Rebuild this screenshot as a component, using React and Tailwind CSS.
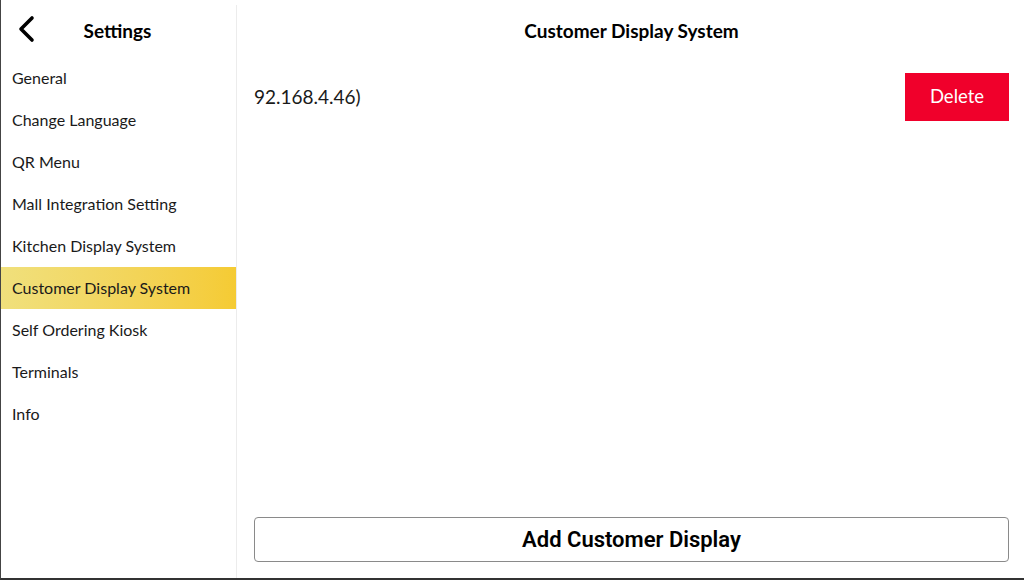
import React from 'react';

const menu = [
  'General',
  'Change Language',
  'QR Menu',
  'Mall Integration Setting',
  'Kitchen Display System',
  'Customer Display System',
  'Self Ordering Kiosk',
  'Terminals',
  'Info',
];

export default function App() {
  const active = 'Customer Display System';

  return (
    <div className="w-[1024px] h-[580px] flex bg-white border-l border-l-[#444] border-b-2 border-b-[#333] font-['Lato','Open_Sans',sans-serif] text-[#1a1a1a] overflow-hidden">
      <aside className="w-[236px] shrink-0 flex flex-col border-r border-r-[#ececec] mt-[5px]">
        <div className="h-[52px] flex items-center relative">
          <button className="absolute left-[14px] top-[10px] p-0">
            <svg width="22" height="28" viewBox="0 0 22 28" fill="none">
              <path d="M17 3 L6 14 L17 25" stroke="#000" strokeWidth="3.6" strokeLinecap="round" strokeLinejoin="round" />
            </svg>
          </button>
          <div className="w-full text-center pr-[2px] text-[19px] font-bold text-black">Settings</div>
        </div>
        <nav className="flex flex-col">
          {menu.map((item) => (
            <div
              key={item}
              className={`h-[42px] flex items-center pl-[11px] text-[16px] ${item === active ? 'bg-gradient-to-r from-[#f0e07c] to-[#f5cb33]' : ''}`}
            >
              {item}
            </div>
          ))}
        </nav>
      </aside>

      <main className="flex-1 flex flex-col px-[17px] pr-[15px]">
        <div className="h-[62px] flex items-center justify-center text-[19px] font-bold text-black">
          Customer Display System
        </div>
        <div className="flex items-center justify-between h-[48px] mt-[11px]">
          <span className="text-[19px]">92.168.4.46)</span>
          <button className="w-[104px] h-[48px] bg-[#f0002b] text-white text-[18.5px]">Delete</button>
        </div>
        <div className="flex-1" />
        <button className="h-[45px] mb-[16px] border border-[#8a8a8a] rounded-[4px] text-[22px] font-semibold text-black font-['Roboto',sans-serif]">
          Add Customer Display
        </button>
      </main>
    </div>
  );
}
